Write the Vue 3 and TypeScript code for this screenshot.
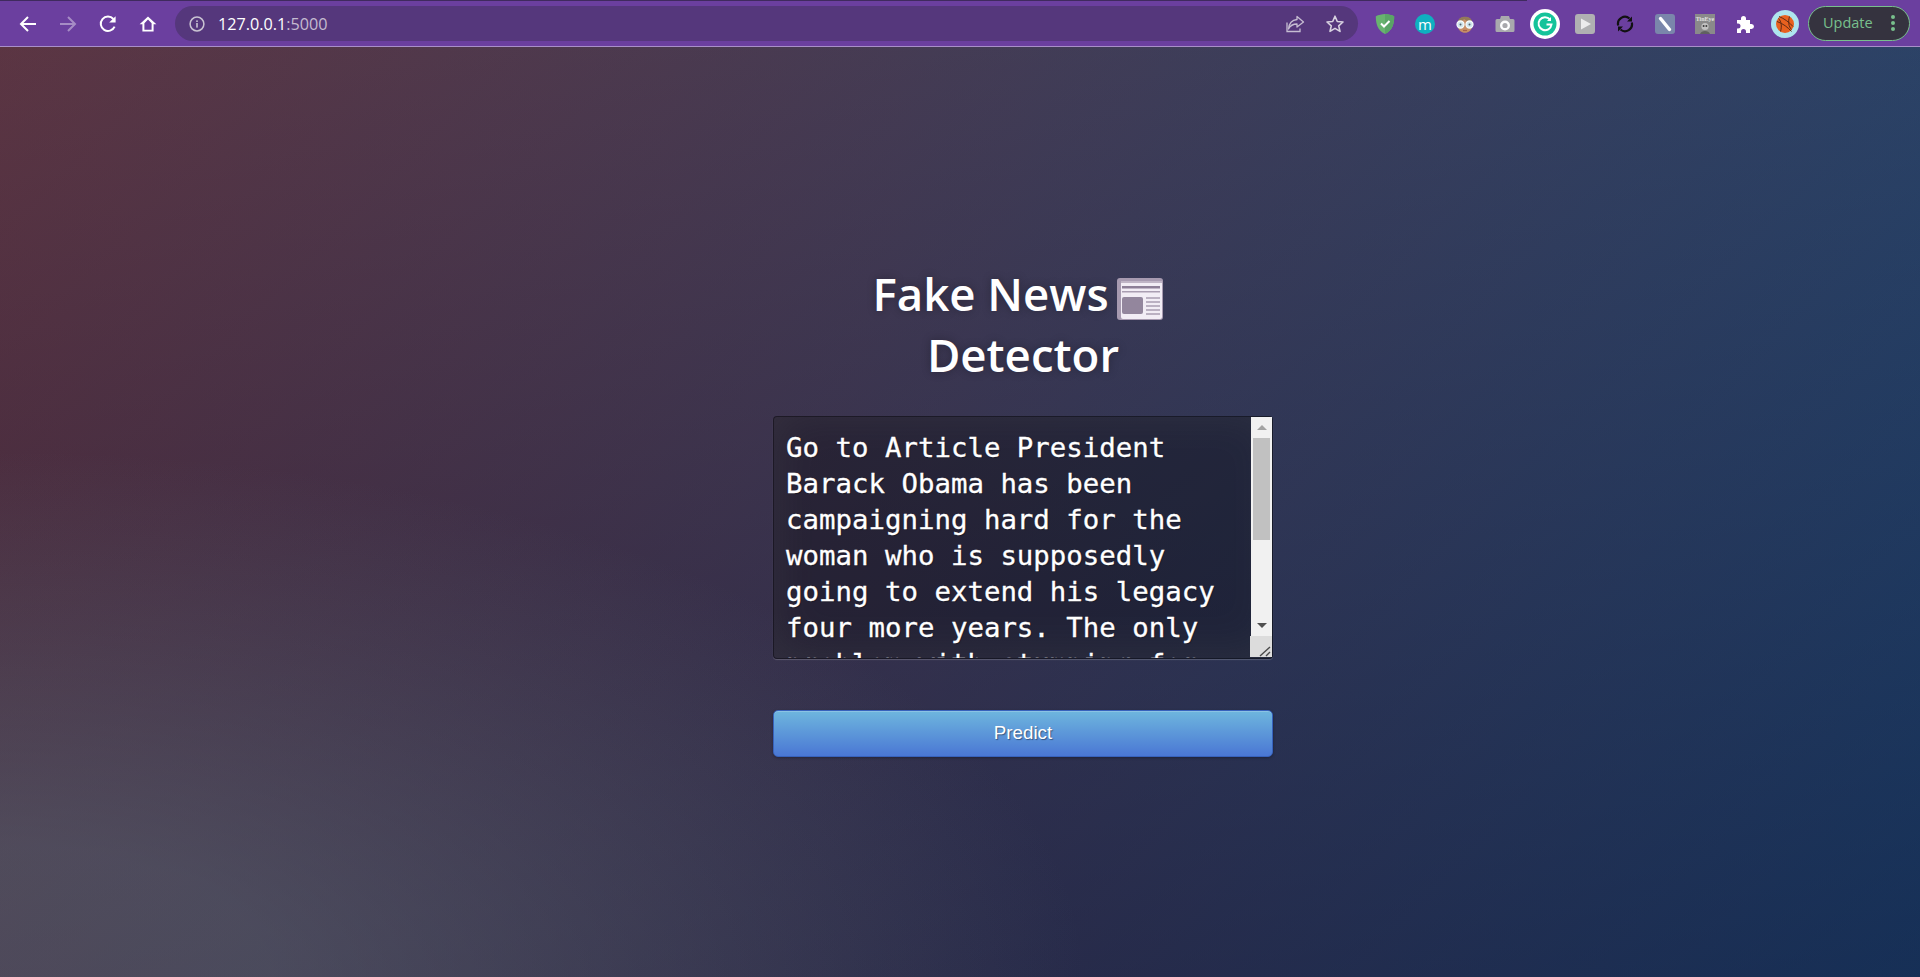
<template>
  <div class="browser">
    <div class="tabEdge"></div>
    <div class="toolbar">
      <button class="navBtn">
        <svg width="20" height="20" viewBox="0 0 20 20"><path d="M18 10H3M10 3l-7 7 7 7" class="line"/></svg>
      </button>
      <button class="navBtn dim">
        <svg width="20" height="20" viewBox="0 0 20 20"><path d="M2 10h15M10 3l7 7-7 7" class="line"/></svg>
      </button>
      <button class="navBtn">
        <svg width="20" height="20" viewBox="0 0 20 20"><path d="M16.6 12.6A7.2 7.2 0 1 1 15.4 5" class="line"/><path d="M17.6 2.2v6.4h-6.4z" fill="#fff"/></svg>
      </button>
      <button class="navBtn">
        <svg width="20" height="20" viewBox="0 0 20 20"><path d="M10 2.4 1.6 10.2h2.8v7.4h11.2v-7.4h2.8zM6.4 15.8V9.2L10 5.6l3.6 3.6v6.6z" fill="#fff" fill-rule="evenodd"/></svg>
      </button>

      <div class="omnibox">
        <svg class="infoIcon" width="16" height="16" viewBox="0 0 16 16"><circle cx="8" cy="8" r="6.9" fill="none" stroke="#c9c3d2" stroke-width="1.5"/><rect x="7.2" y="7" width="1.6" height="4.6" fill="#c9c3d2"/><rect x="7.2" y="4.4" width="1.6" height="1.6" fill="#c9c3d2"/></svg>
        <span class="url">127.0.0.1<span class="port">:5000</span></span>
        <div class="omniActions">
          <svg width="20" height="20" viewBox="0 0 20 20" fill="none" stroke="#c6bdd2" stroke-width="1.3"><path d="M2 8.500v9h13v-3"/><path d="M12 2.500 18.500 8 12 13v-3C8 10 5 12 3.500 15 4 10 7 6 12 5.500z" stroke-linejoin="round"/></svg>
          <svg width="20" height="20" viewBox="0 0 20 20" fill="none" stroke="#d8d2e0" stroke-width="1.6"><path d="m10 2.200 2.300 5.300 5.700.5-4.300 3.800 1.300 5.600-5-3-5 3 1.300-5.600L2 8l5.700-.5z" stroke-linejoin="round"/></svg>
        </div>
      </div>

      <div class="extensions">
        <button class="extBtn">
          <svg width="20" height="22" viewBox="0 0 20 22"><path d="M10 1C7 1 3.500 2 .8 3.200.8 10 2 17 10 21 18 17 19.200 10 19.200 3.200 16.500 2 13 1 10 1z" fill="#68b36f"/><path d="M10 1c3 0 6.500 1 9.200 2.200C19.200 10 18 17 10 21z" fill="#5aa466"/><path d="m6 10.500 3 3 5.500-5.500" fill="none" stroke="#fff" stroke-width="2"/></svg>
        </button>
        <button class="extBtn">
          <span class="mBadge">m</span>
        </button>
        <button class="extBtn">
          <svg width="20" height="20" viewBox="0 0 20 20"><path d="M3 9C3 1 17 1 17 9v3c0 9-14 9-14 0z" fill="#c78f66"/><path d="M3 8C3 1 17 1 17 8c-3 0-6-1-8-3-1 2-3 3-6 3z" fill="#93795a"/><circle cx="5.500" cy="10.500" r="3.500" fill="#cfe6ec" stroke="#f6fbfc" stroke-width="1.300"/><circle cx="14.500" cy="10.500" r="3.500" fill="#cfe6ec" stroke="#f6fbfc" stroke-width="1.300"/><circle cx="5.500" cy="10.500" r="1" fill="#55606a"/><circle cx="14.500" cy="10.500" r="1" fill="#55606a"/><path d="M8 16.500h4" stroke="#a5614a" stroke-width="1.200"/></svg>
        </button>
        <button class="extBtn">
          <svg width="20" height="18" viewBox="0 0 20 18"><path d="M2 4h3l1-3h8l1 3h3a1.500 1.500 0 0 1 1.500 1.500v10A1.500 1.500 0 0 1 18 17H2A1.500 1.500 0 0 1 .5 15.500v-10A1.500 1.500 0 0 1 2 4z" fill="#a9a9ad"/><circle cx="10" cy="10.500" r="3.800" fill="none" stroke="#fff" stroke-width="2.400"/></svg>
        </button>
        <button class="extBtn">
          <svg width="30" height="30" viewBox="0 0 30 30"><circle cx="15" cy="15" r="15" fill="#fff"/><circle cx="15" cy="15" r="11.500" fill="#15c39a"/><path d="M20 10.500A6.500 6.500 0 1 0 21.500 15.500h-5" fill="none" stroke="#fff" stroke-width="2"/><path d="M21 8v4h-4z" fill="#fff"/></svg>
        </button>
        <button class="extBtn">
          <svg width="20" height="20" viewBox="0 0 20 20"><rect width="20" height="20" rx="3" fill="#b0b0b2"/><path d="M6 4.500 16 10 6 15.500z" fill="#ececec"/></svg>
        </button>
        <button class="extBtn">
          <svg width="20" height="20" viewBox="0 0 20 20" fill="none" stroke="#111" stroke-width="2.200"><path d="M3.200 11.500A7 7 0 0 1 14.500 4.500"/><path d="M16.800 8.500A7 7 0 0 1 5.500 15.500"/><path d="M17 2.500v5h-5z" fill="#111" stroke="none"/><path d="M3 17.500v-5h5z" fill="#111" stroke="none"/></svg>
        </button>
        <button class="extBtn">
          <svg width="20" height="20" viewBox="0 0 20 20"><rect width="20" height="20" rx="3" fill="#7a86ab"/><path d="m5.500 4.500 9 11" stroke="#fff" stroke-width="3.400" stroke-linecap="round"/></svg>
        </button>
        <button class="extBtn">
          <svg width="20" height="20" viewBox="0 0 20 20"><rect width="20" height="20" fill="#8a8a8a"/><text x="10" y="6.500" text-anchor="middle" class="tinEyeText">TinEye</text><circle cx="10" cy="12.500" r="3.600" fill="#c2c2c2"/><circle cx="8.600" cy="12" r="1" fill="#3c3c3c"/><circle cx="11.400" cy="12" r="1" fill="#3c3c3c"/><path d="M5 20c1-4 9-4 10 0z" fill="#606060"/></svg>
        </button>
        <button class="extBtn">
          <svg width="18" height="18" viewBox="0 0 18 18"><path d="M1 5h4V3.500a2.500 2.500 0 0 1 5 0V5h4v4h1.500a2.500 2.500 0 0 1 0 5H14v4h-4v-1.500a2.500 2.500 0 0 0-5 0V18H1v-4.500h1a2.500 2.500 0 0 0 0-5H1z" fill="#fff"/></svg>
        </button>
        <button class="extBtn">
          <svg width="28" height="28" viewBox="0 0 28 28"><circle cx="14" cy="14" r="14" fill="#aee4ee"/><circle cx="14" cy="14" r="9" fill="#e8611f"/><path d="M7.500 8.500c3 3 3.500 8 2 13M20.500 19.500c-3-3-3.500-8-2-13M6 11.500c6 2 11 6 14.500 10M8 6.500c5 2 10 5.500 14 10" fill="none" stroke="#5e2a14" stroke-width="1"/></svg>
        </button>
      </div>

      <div class="updatePill">
        <span>Update</span>
        <svg width="4" height="18" viewBox="0 0 4 18" fill="#78c08d"><circle cx="2" cy="3" r="2"/><circle cx="2" cy="9" r="2"/><circle cx="2" cy="15" r="2"/></svg>
      </div>
    </div>
  </div>

  <div class="page">
    <div class="login">
      <h1>
        Fake News
        <svg class="newsEmoji" width="46" height="42" viewBox="0 0 46 42">
          <rect width="46" height="42" rx="3" fill="#a79ab0"/>
          <rect x="4" y="3" width="41" height="38" rx="2" fill="#f2edf5"/>
          <path d="M4 3h41v2H4z" fill="#c0b5c6"/>
          <rect x="5" y="8" width="38" height="2.500" fill="#8d7f97"/>
          <rect x="5" y="13" width="38" height="1.500" fill="#a99db1"/>
          <rect x="5" y="19" width="21" height="17" rx="2" fill="#93869d"/>
          <path d="M29 20h14M29 24h14M29 28h14M29 32h14M29 36h14" stroke="#a99db1" stroke-width="1.500"/>
        </svg>
        <br />
        Detector
      </h1>
      <div class="inputWrap">
        <textarea class="newsInput" spellcheck="false" v-model="article"></textarea>
        <!-- scrollbar is drawn by hand, the headless browser hides the native one -->
        <div class="scrollBar">
          <div class="arrowBtn"><span class="arrowUp"></span></div>
          <div class="scrollTrack"><div class="scrollThumb"></div></div>
          <div class="arrowBtn"><span class="arrowDown"></span></div>
          <div class="resizeCorner">
            <svg width="22" height="21" viewBox="0 0 22 21" fill="none" stroke="#4a4a4a" stroke-width="1.400"><path d="m10 20 10-9M16 20l4-4"/></svg>
          </div>
        </div>
      </div>
      <button class="predictBtn">Predict</button>
    </div>
  </div>
</template>

<script setup lang="ts">
import { ref } from 'vue';

const article = ref(
  'Go to Article President Barack Obama has been campaigning hard for the woman who is supposedly going to extend his legacy four more years. The only problem with stumping for Hillary Clinton, however, is she’s not exactly a candidate easy to get too enthused about.'
);
</script>

<style scoped>
.browser {
  height: 47px;
  background: #6b3f9f;
  border-bottom: 1px solid #a98fc9;
  box-sizing: border-box;
}

.tabEdge {
  width: 1527px;
  height: 1px;
  background: #3f2a5e;
}

.toolbar {
  display: flex;
  align-items: center;
  height: 45px;
  padding: 0 10px 0 7.500px;
}

.navBtn, .extBtn {
  flex: none;
  display: flex;
  align-items: center;
  justify-content: center;
  width: 40px;
  height: 40px;
  padding: 0;
  border: none;
  background: none;
}

.navBtn.dim {
  opacity: 0.4;
}

.line {
  fill: none;
  stroke: #fff;
  stroke-width: 2;
}

.omnibox {
  flex: 1;
  display: flex;
  align-items: center;
  height: 35px;
  margin: 0 7px 0 7.500px;
  padding: 0 13px 0 14px;
  border-radius: 18px;
  background: #55377c;
}

.infoIcon {
  margin-right: 13px;
}

.url {
  font: 16.200px "Open Sans", sans-serif;
  color: #fff;
}

.port {
  color: #c4bbd0;
}

.omniActions {
  display: flex;
  gap: 20px;
  margin-left: auto;
}

.extensions {
  display: flex;
}

.mBadge {
  display: flex;
  align-items: center;
  justify-content: center;
  width: 20px;
  height: 20px;
  border-radius: 50%;
  background: #0fb0c0;
  font: 15px "Open Sans", sans-serif;
  color: #fff;
}

.tinEyeText {
  font: bold 6px "Liberation Serif", serif;
  fill: #e2e2e2;
}

.updatePill {
  display: flex;
  align-items: center;
  justify-content: space-between;
  width: 102px;
  height: 35px;
  margin-left: 3px;
  padding: 0 14px 2px 14px;
  box-sizing: border-box;
  border: 1px solid #78c08d;
  border-radius: 18px;
  background: #35333f;
  font: 14.500px "Open Sans", sans-serif;
  color: #78c08d;
}

.page {
  height: 930px;
  background:
    radial-gradient(ellipse farthest-corner at 0% 100%, rgba(104, 128, 138, 0.4) 10%, rgba(138, 114, 76, 0) 40%),
    linear-gradient(to bottom, rgba(57, 173, 219, 0.25) 0%, rgba(42, 60, 87, 0.4) 100%),
    linear-gradient(135deg, #670d10 0%, #092756 100%);
}

.login {
  display: flex;
  flex-direction: column;
  width: 500px;
  margin-left: 773px;
  padding-top: 216px;
}

h1 {
  margin: 0 0 31px;
  font: 600 45.600px/61px "Open Sans", sans-serif;
  color: #fff;
  text-align: center;
  text-shadow: 0 0 10px rgba(0, 0, 0, 0.3);
}

.newsEmoji {
  margin: 0 11px 0 -4px;
  vertical-align: -9px;
}

.inputWrap {
  position: relative;
  height: 243px;
}

.newsInput {
  display: block;
  box-sizing: border-box;
  width: 500px;
  height: 243px;
  padding: 13px 12px 0;
  overflow: hidden;
  resize: none;
  border: 1px solid rgba(0, 0, 0, 0.3);
  border-radius: 4px;
  outline: none;
  background: rgba(0, 0, 0, 0.3);
  box-shadow: inset 0 -5px 45px rgba(100, 100, 100, 0.2), 0 1px 1px rgba(255, 255, 255, 0.2);
  color: #fff;
  font: 27.400px/36px "DejaVu Sans Mono", monospace;
  -webkit-text-stroke: 0.3px #fff;
  text-shadow: 1px 1px 1px rgba(0, 0, 0, 0.3);
}

.scrollBar {
  position: absolute;
  top: 1px;
  right: 1px;
  bottom: 2px;
  display: flex;
  flex-direction: column;
  width: 21px;
  background: #f1f1f1;
}

.arrowBtn {
  flex: none;
  display: flex;
  align-items: center;
  justify-content: center;
  height: 21px;
}

.arrowUp, .arrowDown {
  width: 0;
  height: 0;
  border-left: 5px solid transparent;
  border-right: 5px solid transparent;
}

.arrowUp {
  border-bottom: 5px solid #a3a3a3;
}

.arrowDown {
  border-top: 5px solid #505050;
}

.scrollTrack {
  flex: 1;
  padding: 0 2px;
}

.scrollThumb {
  height: 102px;
  background: #c1c1c1;
}

.resizeCorner {
  flex: none;
  height: 21px;
  margin-left: -1px;
  background: #dcdcdc;
}

.resizeCorner svg {
  display: block;
}

.predictBtn {
  height: 47px;
  margin-top: 51px;
  padding: 0 0 2px;
  border: 1px solid #3762bc;
  border-radius: 5px;
  background: linear-gradient(to bottom, #6eb6de, #4a77d4);
  box-shadow: inset 0 1px 0 rgba(255, 255, 255, 0.2), 0 1px 3px rgba(0, 0, 0, 0.3);
  color: #fff;
  font: 18.750px "Liberation Sans", Arial, sans-serif;
  text-shadow: 1px 1px 1px rgba(0, 0, 0, 0.4);
}
</style>

<style>
body {
  overflow: hidden;
}
</style>
